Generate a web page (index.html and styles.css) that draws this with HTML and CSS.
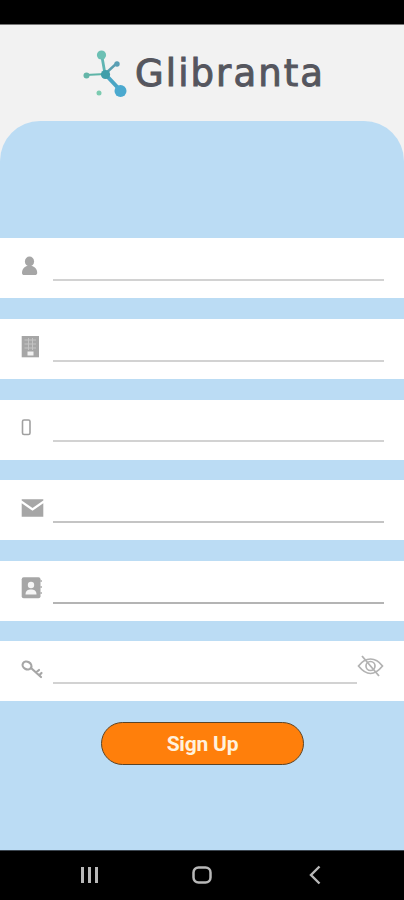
FILE: index.html
```html
<!DOCTYPE html>
<html lang="en">
<head>
<meta charset="utf-8">
<title>Glibranta Sign Up</title>
<link rel="stylesheet" href="styles.css">
</head>
<body>
<div class="app">
  <div class="statusbar"></div>
  <header class="brand">
    <svg class="brand-mark" width="46" height="48" viewBox="0 0 46 48" aria-hidden="true">
      <g fill="none" stroke-linecap="round">
        <path d="M18.500 4 L22 24" stroke="#5fb5b3" stroke-width="2.800"/>
        <path d="M3 25 L22 24" stroke="#5fb5a8" stroke-width="2.200"/>
        <path d="M34 13 L22 24" stroke="#5a9fb0" stroke-width="2.400"/>
        <path d="M22 24 L37 40" stroke="#4aa5c4" stroke-width="4"/>
      </g>
      <circle cx="18.500" cy="5" r="4.600" fill="#6cc0b4"/>
      <circle cx="3.500" cy="25.500" r="3" fill="#64b5a8"/>
      <circle cx="34" cy="14" r="2.700" fill="#5a9fb5"/>
      <circle cx="16" cy="43" r="2.500" fill="#7ccbb0"/>
      <circle cx="22.500" cy="24.500" r="4.600" fill="#3f9eaa"/>
      <circle cx="37.500" cy="41" r="6" fill="#4ba9cf"/>
    </svg>
    <span class="brand-name">Glibranta</span>
  </header>
  <main class="panel">
    <div class="row">
      <svg class="icon" width="32" height="32" viewBox="0 0 32 32" aria-hidden="true">
        <ellipse cx="8.500" cy="9.500" rx="4.600" ry="5" fill="#a6a6a6"/>
        <path d="M1 21 C1 16.500 4 14.500 6 14 L11 14 C13 14.500 16.200 16.500 16.200 21 C16.200 22.500 15 23 14 23 L3 23 C2 23 1 22.500 1 21 Z" fill="#a6a6a6"/>
      </svg>
      <input class="field" type="text" aria-label="Name">
    </div>
    <div class="row">
      <svg class="icon" width="32" height="32" viewBox="0 0 32 32" aria-hidden="true">
        <rect x="0.700" y="3" width="17.300" height="21.300" fill="#a6a6a6"/>
        <path d="M3.500 7 H15 M3.500 11 H15 M3.500 15 H15 M7.500 5 V17 M11.500 5 V17" stroke="#c4c4c4" stroke-width="1"/>
        <rect x="6.500" y="18.500" width="6" height="4" fill="#f0f0f0"/>
      </svg>
      <input class="field" type="text" aria-label="Company">
    </div>
    <div class="row">
      <svg class="icon" width="32" height="32" viewBox="0 0 32 32" aria-hidden="true">
        <rect x="1.500" y="6" width="7.500" height="14.500" rx="1.500" fill="none" stroke="#a0a0a0" stroke-width="1.600"/>
      </svg>
      <input class="field field-high" type="text" aria-label="Phone">
    </div>
    <div class="row">
      <svg class="icon" width="32" height="32" viewBox="0 0 32 32" aria-hidden="true">
        <path d="M0.700 5.300 H22.300 V6.500 L11.500 14 L0.700 6.500 Z" fill="#a6a6a6"/>
        <path d="M0.700 9.300 L11.500 16.800 L22.300 9.300 V22.700 H0.700 Z" fill="#a6a6a6"/>
      </svg>
      <input class="field field-mid" type="text" aria-label="Email">
    </div>
    <div class="row">
      <svg class="icon" width="32" height="32" viewBox="0 0 32 32" aria-hidden="true">
        <rect x="0.700" y="2.300" width="18.800" height="21" rx="2" fill="#a6a6a6"/>
        <path d="M19.500 6 H20.700 M19.500 12 H20.700 M19.500 18 H20.700" stroke="#a6a6a6" stroke-width="2"/>
        <circle cx="10" cy="10" r="3.200" fill="#f6f6f6"/>
        <path d="M4.500 19.500 C4.500 15.500 7 14.500 10 14.500 C13 14.500 15.500 15.500 15.500 19.500 Z" fill="#f6f6f6"/>
      </svg>
      <input class="field field-dark" type="text" aria-label="Contact">
    </div>
    <div class="row">
      <svg class="icon" width="32" height="32" viewBox="0 0 32 32" aria-hidden="true">
        <g fill="none" stroke="#a6a6a6" stroke-width="2.200" stroke-linecap="round">
          <ellipse cx="6" cy="10.500" rx="4.600" ry="3.800" transform="rotate(30 6 10.500)"/>
          <path d="M10 13 L20 22 M15 17.500 L18 15 M18.200 20.300 L20.500 18"/>
        </g>
      </svg>
      <input class="field field-short" type="password" aria-label="Password">
      <svg class="eye" width="27" height="24" viewBox="0 0 27 24" aria-hidden="true">
        <g fill="none" stroke="#b2b2b2" stroke-width="1.700">
          <path d="M1.500 12 C6 6 10 5 13.500 5 C17 5 21 6 25.500 12 C21 17.500 17 19.500 13.500 19.500 C10 19.500 6 17.500 1.500 12 Z"/>
          <circle cx="13.500" cy="12" r="4.500"/>
          <path d="M5 2 L22 22" stroke-width="1.800"/>
        </g>
      </svg>
    </div>
    <div class="actions">
      <button class="signup" type="button">Sign Up</button>
    </div>
  </main>
  <nav class="navbar">
    <svg width="19" height="18" viewBox="0 0 19 18" aria-hidden="true">
      <path d="M2.500 1 V17 M9.500 1 V17 M16.500 1 V17" stroke="#b8b8b8" stroke-width="3"/>
    </svg>
    <svg width="20" height="18" viewBox="0 0 20 18" aria-hidden="true">
      <rect x="1.500" y="1.500" width="17" height="15" rx="5" fill="none" stroke="#b8b8b8" stroke-width="2.500"/>
    </svg>
    <svg width="13" height="20" viewBox="0 0 13 20" aria-hidden="true">
      <path d="M10.500 1.500 L2 10 L10.500 18.500" fill="none" stroke="#b8b8b8" stroke-width="2.400"/>
    </svg>
  </nav>
</div>
</body>
</html>
```

FILE: styles.css
```css
* {
  box-sizing: border-box;
}

html,
body {
  margin: 0;
  padding: 0;
  background: #000;
}

.app {
  width: 404px;
  height: 900px;
  display: flex;
  flex-direction: column;
  background: #f2f2f2;
  overflow: hidden;
}

.statusbar {
  height: 25px;
  flex: none;
  background: #000;
  border-bottom: 1px solid #777;
}

.brand {
  height: 96px;
  flex: none;
  display: flex;
  align-items: flex-start;
  padding: 25px 0 0 83px;
}

.brand-mark {
  flex: none;
  display: block;
}

.brand-name {
  margin: 0 0 0 6px;
  font-family: "DejaVu Sans", sans-serif;
  font-size: 37px;
  line-height: 48px;
  letter-spacing: 2.1px;
  color: #55565e;
  -webkit-text-stroke: 1px #55565e;
}

.panel {
  flex: 1;
  display: flex;
  flex-direction: column;
  gap: 20.6px;
  padding-top: 117.4px;
  background: #bbdcf4;
  border-radius: 40px 40px 0 0;
}

.row {
  height: 60px;
  flex: none;
  display: flex;
  align-items: flex-start;
  padding: 0 20px 0 21px;
  background: #fff;
}

.icon {
  flex: none;
  display: block;
  margin-top: 14px;
}

.eye {
  flex: none;
  display: block;
  margin: 13px 0 0;
}

.field {
  flex: 1;
  min-width: 0;
  height: 43px;
  padding: 0;
  border: 0;
  border-bottom: 2px solid #d2d2d2;
  background: transparent;
  outline: none;
}

.field-high {
  height: 42px;
}

.field-mid {
  border-bottom-color: #c4c4c4;
}

.field-dark {
  border-bottom-color: #b4b4b4;
}

.actions {
  display: flex;
  justify-content: center;
  padding-left: 1px;
}

.signup {
  width: 203px;
  height: 43px;
  padding: 1px 0 0;
  border: 1px solid #5c4426;
  border-radius: 22px;
  background: #ff7f0b;
  color: #fff1dc;
  font-family: Roboto, sans-serif;
  font-size: 21px;
  font-weight: 700;
  letter-spacing: -0.2px;
}

.navbar {
  height: 50px;
  flex: none;
  display: grid;
  grid-template-columns: repeat(3, 113px);
  justify-content: center;
  justify-items: center;
  align-items: center;
  padding-bottom: 1px;
  background: #000;
  border-top: 1px solid #3c4650;
}

.navbar svg {
  display: block;
}
```
